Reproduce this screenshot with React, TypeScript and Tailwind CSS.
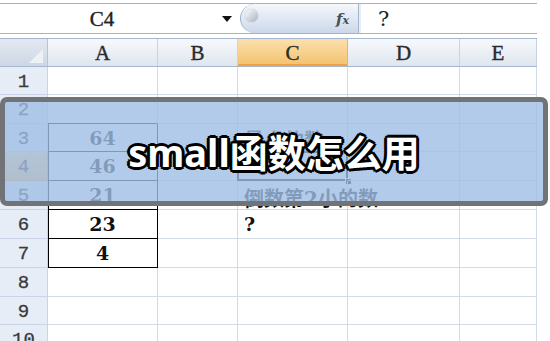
import React from 'react';

const cols = [
  { key: 'A', w: 'w-[110px]' },
  { key: 'B', w: 'w-[80px]' },
  { key: 'C', w: 'w-[110px]' },
  { key: 'D', w: 'w-[112px]' },
  { key: 'E', w: 'w-[77px]' },
];

const rowHeights = [
  'h-[28px]', 'h-[29px]', 'h-[28px]', 'h-[29px]', 'h-[29px]',
  'h-[29px]', 'h-[29px]', 'h-[29px]', 'h-[28px]', 'h-[29px]',
];

const aValues: Record<number, string> = { 3: '64', 4: '46', 5: '21', 6: '23', 7: '4' };

const mono = "font-['Liberation_Mono',monospace] [-webkit-text-stroke:0.3px_currentColor]";
const serif = "font-['Liberation_Serif',serif] [-webkit-text-stroke:0.4px_currentColor]";
const serifBold = "font-['DejaVu_Serif',serif] font-bold";
const cjk = "font-['DejaVu_Serif','Noto_Sans_CJK_SC',serif] font-bold";

function FormulaBar() {
  return (
    <div className="pt-[3px]">
      <div className="flex h-[31px] w-[537px] border-y border-[#a3b3cb] bg-white">
        <div className="relative flex w-[240px] items-center justify-center pt-[3px]">
          <span className={`${serif} text-[21px] text-[#222] pr-[36px]`}>C4</span>
          <svg className="absolute right-[8px] top-[12px]" width="10" height="7" viewBox="0 0 10 7">
            <polygon points="0,0 10,0 5,6" fill="#111" />
          </svg>
        </div>
        <div className="relative flex w-[118px] items-center justify-end rounded-l-full border-l border-[#9fb2cc] bg-gradient-to-b from-[#f5f8fc] to-[#cbd8ea] pr-[9px] pt-[2px]">
          <div className="absolute left-[4px] top-[5px] h-[13px] w-[13px] rounded-full bg-gradient-to-br from-[#ffffff] to-[#a8b2c0] shadow-[0_0_1px_#8894a6]" />
          <span className="font-['DejaVu_Serif',serif] text-[15px] italic font-bold text-[#4a4f58]">
            f<span className="text-[11px]">x</span>
          </span>
        </div>
        <div className="w-[3px] border-l border-[#a3b3cb] bg-[#e9eef6]" />
        <div className="flex items-center pl-[17px] pt-[2px]">
          <span className="font-['DejaVu_Serif',serif] text-[21px] text-[#222]">?</span>
        </div>
      </div>
    </div>
  );
}

function HeaderRow() {
  return (
    <div className="flex h-[29px] border-y border-[#a6b6cf]">
      <div className="relative w-[48px] border-r border-[#b7c4d6] bg-gradient-to-b from-[#e3e9f1] to-[#cdd7e5]">
        <svg className="absolute right-[4px] bottom-[3px]" width="14" height="14" viewBox="0 0 14 14">
          <polygon points="14,0 14,14 0,14" fill="#eef2f7" />
        </svg>
      </div>
      {cols.map(c => (
        <div
          key={c.key}
          className={`${c.w} flex items-center justify-center border-r pt-[2px] ${
            c.key === 'C'
              ? 'border-[#f0b15a] bg-gradient-to-b from-[#fbe0ae] to-[#f3c16a] shadow-[inset_0_-2px_0_#f2a040]'
              : 'border-[#c9d3e2] bg-gradient-to-b from-[#f7f9fc] to-[#dfe6ef]'
          }`}
        >
          <span className={`${serif} text-[21px] text-[#2b2b2b]`}>{c.key}</span>
        </div>
      ))}
    </div>
  );
}

function Cell({ row, col }: { row: number; col: string }) {
  const boxed = col === 'A' && row >= 3 && row <= 7;
  const aboveBox = col === 'A' && row === 2;
  let border = 'border-r border-b border-[#d4dbe8]';
  if (boxed) border = 'border-r border-b border-black shadow-[inset_1px_0_0_#000]';
  else if (aboveBox) border = 'border-r border-b border-r-[#d4dbe8] border-b-black';

  const w = cols.find(c => c.key === col)!.w;

  return (
    <div className={`${w} relative flex items-center ${border}`}>
      {col === 'A' && aValues[row] && (
        <span className={`${serifBold} w-full pt-[1px] text-center text-[19px] text-[#111]`}>{aValues[row]}</span>
      )}
      {col === 'C' && row === 3 && (
        <span className={`${cjk} absolute left-[6px] top-[2px] whitespace-nowrap text-[20px] text-[#111]`}>最小的数</span>
      )}
      {col === 'C' && row === 4 && (
        <>
          <div className="absolute inset-[-1px] border-2 border-black" />
          <div className="absolute right-[-5px] bottom-[-5px] h-[7px] w-[7px] border border-white bg-black" />
        </>
      )}
      {col === 'C' && row === 5 && (
        <span className={`${cjk} absolute left-[6px] top-[3px] whitespace-nowrap text-[20px] text-[#111]`}>倒数第2小的数</span>
      )}
      {col === 'C' && row === 6 && (
        <span className={`${serifBold} pl-[6px] text-[19px] text-[#111]`}>?</span>
      )}
    </div>
  );
}

function Grid() {
  return (
    <div className="w-[537px]">
      <HeaderRow />
      {rowHeights.map((h, i) => {
        const row = i + 1;
        return (
          <div key={row} className={`flex ${h}`}>
            <div
              className={`flex w-[48px] items-center justify-center border-r border-b pt-[3px] ${
                row === 4
                  ? 'border-[#e9a54c] bg-gradient-to-b from-[#fbdca5] to-[#f2c26c]'
                  : 'border-[#c9d5e6] bg-[#e6edf7]'
              }`}
            >
              <span className={`${mono} text-[19px] text-[#3a3a3a]`}>{row}</span>
            </div>
            {cols.map(c => (
              <Cell key={c.key} row={row} col={c.key} />
            ))}
          </div>
        );
      })}
    </div>
  );
}

export default function App() {
  return (
    <div className="relative h-[341px] w-[550px] overflow-hidden bg-white">
      <FormulaBar />
      <div className="h-[4px]" />
      <Grid />
      <div className="absolute left-0 top-[97px] flex h-[109px] w-[548px] items-center justify-center rounded-[7px] border-[5px] border-[#727377] bg-[rgba(160,190,229,0.8)]">
        <span className="font-['Noto_Sans','Noto_Sans_CJK_SC',sans-serif] text-[38px] font-bold leading-none text-white [text-shadow:-2px_-2px_0_#000,2px_-2px_0_#000,-2px_2px_0_#000,2px_2px_0_#000,0_-3px_0_#000,0_3px_0_#000,-3px_0_0_#000,3px_0_0_#000]">
          small函数怎么用
        </span>
      </div>
    </div>
  );
}
